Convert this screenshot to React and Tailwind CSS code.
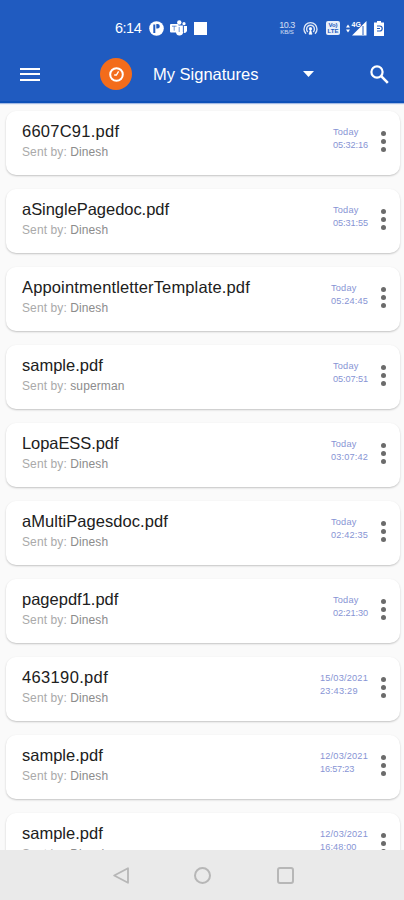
import React from 'react';

const documents = [
  { name: '6607C91.pdf', sender: 'Dinesh', date: 'Today', time: '05:32:16', fit: 'tracking-[0.25px]', timeWidth: 'w-[35px]', timeFit: 'tracking-[-0.1px]' },
  { name: 'aSinglePagedoc.pdf', sender: 'Dinesh', date: 'Today', time: '05:31:55', fit: 'tracking-[-0.04px]', timeWidth: 'w-[35px]', timeFit: 'tracking-[-0.1px]' },
  { name: 'AppointmentletterTemplate.pdf', sender: 'Dinesh', date: 'Today', time: '05:24:45', fit: 'tracking-[0.14px]', timeWidth: 'w-[37px]', timeFit: 'tracking-[0.15px]' },
  { name: 'sample.pdf', sender: 'superman', date: 'Today', time: '05:07:51', fit: 'tracking-normal', timeWidth: 'w-[35px]', timeFit: 'tracking-[-0.1px]' },
  { name: 'LopaESS.pdf', sender: 'Dinesh', date: 'Today', time: '03:07:42', fit: 'tracking-[-0.07px]', timeWidth: 'w-[37px]', timeFit: 'tracking-[0.15px]' },
  { name: 'aMultiPagesdoc.pdf', sender: 'Dinesh', date: 'Today', time: '02:42:35', fit: 'tracking-[0.05px]', timeWidth: 'w-[37px]', timeFit: 'tracking-[0.15px]' },
  { name: 'pagepdf1.pdf', sender: 'Dinesh', date: 'Today', time: '02:21:30', fit: 'tracking-normal', timeWidth: 'w-[35px]', timeFit: 'tracking-[-0.1px]' },
  { name: '463190.pdf', sender: 'Dinesh', date: '15/03/2021', time: '23:43:29', fit: 'tracking-[0.35px]', timeWidth: 'w-[48px]', timeFit: 'tracking-[0.25px]' },
  { name: 'sample.pdf', sender: 'Dinesh', date: '12/03/2021', time: '16:57:23', fit: 'tracking-normal', timeWidth: 'w-[48px]', timeFit: 'tracking-[-0.2px]' },
  { name: 'sample.pdf', sender: 'Dinesh', date: '12/03/2021', time: '16:48:00', fit: 'tracking-normal', timeWidth: 'w-[48px]', timeFit: 'tracking-[0.1px]' },
];

const StatusBar = () => (
  <div className="flex h-14 items-center pl-[115px] text-white">
    <span className="w-[34px] text-[14.5px] leading-none tracking-[-0.5px]">6:14</span>
    <svg className="size-[15px]" viewBox="0 0 15 15">
      <circle cx="7.5" cy="7.5" r="7.3" fill="#fff" />
      <path d="M5.3 12V3.5" stroke="#205bc0" strokeWidth="2" fill="none" />
      <path d="M7.3 3h1.2a2.3 2.3 0 0 1 0 4.6H7.3z" fill="#205bc0" />
    </svg>
    {/* Teams */}
    <svg className="ml-[6px] h-4 w-[17px]" viewBox="0 0 17 16" fill="#fff">
      <circle cx="9.3" cy="2.5" r="2.2" />
      <circle cx="14" cy="3.7" r="1.6" />
      <path d="M6 5.5h7v6a3.5 3.5 0 0 1-7 1z" />
      <path d="M13.7 6H17v4.5a2.5 2.5 0 0 1-3.3 2.3z" />
      <rect y="4" width="8.5" height="8.5" rx="1" />
      <path d="M2 6.2h4.5M4.2 6.2v4.5M9.2 7v5M13.3 6v6" stroke="#205bc0" strokeOpacity=".7" strokeWidth=".9" />
    </svg>
    <div className="ml-[7px] size-[13px] bg-white" />

    <div className="ml-[72px] flex w-4 flex-col items-center text-white/80">
      <span className="text-[9px] leading-[8px] tracking-[-0.5px]">10.3</span>
      <span className="text-[6px] leading-[6px] tracking-[-0.1px]">KB/S</span>
    </div>
    {/* hotspot */}
    <svg className="ml-2 h-[14px] w-[15px]" viewBox="0 0 15 14" fill="none" stroke="#fff" strokeOpacity=".85" strokeWidth="1.4">
      <path d="M3 12.8a6.5 6.5 0 1 1 9 0M4.8 10.9a3.9 3.9 0 1 1 5.4 0" />
      <path d="M7.5 8.5L6 13.2h3z" strokeWidth=".8" fill="#fff" />
      <circle cx="7.5" cy="7.7" r="1" fill="#fff" />
    </svg>
    <div className="ml-[8px] flex h-[14px] w-[14px] flex-col items-center justify-center rounded-[2px] bg-white/90 text-[6px] leading-[6px] font-bold text-[#205bc0]">
      <span>Vo)</span>
      <span>LTE</span>
    </div>
    {/* mobile data and signal */}
    <svg className="ml-[6px] h-[15px] w-[21px]" viewBox="0 0 21 15" fill="#fff">
      <path d="M0 6.5L2 3.5l2 3zM0 8.5h4l-2 3z" />
      <path d="M20.5 0v14.5H6z" />
      <path d="M17 5v9" stroke="#205bc0" strokeWidth="1" />
      <text x="5.5" y="6" fontSize="7" fontWeight="bold" fontFamily="Liberation Sans, sans-serif">4G</text>
    </svg>
    {/* battery */}
    <svg className="ml-[7px] h-[15px] w-[10px]" viewBox="0 0 10 15">
      <path d="M3 0h4v1.5h3V15H0V1.5h3z" fill="#fff" />
      <path d="M3 5h2.7a2.4 2.4 0 0 1 0 5H3M3 7.5h3" stroke="#205bc0" strokeWidth="1.2" fill="none" />
    </svg>
  </div>
);

const Toolbar = () => (
  <div className="flex h-9 items-center pl-5 text-white">
    <div className="flex w-5 flex-col gap-[3.5px]">
      <div className="h-[2px] bg-white" />
      <div className="h-[2px] bg-white" />
      <div className="h-[2px] bg-white" />
    </div>
    <div className="ml-[60px] flex size-8 items-center justify-center rounded-full bg-[#f36c1b]">
      <svg className="size-[15px]" viewBox="0 0 15 15" fill="none" stroke="#fff">
        <circle cx="7.5" cy="7.5" r="6.3" strokeWidth="2" />
        <path d="M9.6 4.4L7.4 8H5.2" strokeWidth="1.3" />
      </svg>
    </div>
    <span className="ml-[21px] w-[150px] text-[16.5px] leading-none">My Signatures</span>
    <svg className="h-[6px] w-[11px]" viewBox="0 0 11 6" fill="#fff">
      <path d="M0 0h11L5.5 6z" />
    </svg>
    <svg className="ml-[56px] size-[19px]" viewBox="0 0 19 19" fill="none" stroke="#fff">
      <circle cx="7" cy="7" r="5.6" strokeWidth="2.2" />
      <path d="M11.2 11.2l6.6 6.6" strokeWidth="2.6" />
    </svg>
  </div>
);

const DocumentCard = ({ doc }) => (
  <div className="flex h-16 shrink-0 rounded-[10px] bg-white pl-4 shadow-[0_1px_2px_rgba(0,0,0,0.22)]">
    <div className="flex-1 pt-[10px] whitespace-nowrap">
      <div className={`text-[16.5px] leading-5 text-[#202020] ${doc.fit}`}>{doc.name}</div>
      <div className="mt-[2px] text-[12px] leading-[18px] tracking-[0.1px] text-[#aaa]">
        Sent by: <span className="text-[#8c8c8c]">{doc.sender}</span>
      </div>
    </div>
    <div className={`pt-[15px] text-[9.2px] leading-[12.5px] whitespace-nowrap text-[#8794d4] ${doc.timeWidth}`}>
      <div className="tracking-[0.2px]">{doc.date}</div>
      <div className={doc.timeFit}>{doc.time}</div>
    </div>
    <div className="mr-[14px] ml-[13px] flex flex-col gap-[3px] pt-[20px]">
      <div className="size-[5px] rounded-full bg-[#6b6b6b]" />
      <div className="size-[5px] rounded-full bg-[#6b6b6b]" />
      <div className="size-[5px] rounded-full bg-[#6b6b6b]" />
    </div>
  </div>
);

const NavigationBar = () => (
  <div className="flex h-[50px] shrink-0 items-center bg-[#eaeaea] pl-[113px]">
    <svg className="h-[17px] w-4" viewBox="0 0 16 17" fill="none" stroke="#b7b7b7" strokeWidth="1.8" strokeLinejoin="round">
      <path d="M15 1.2v14.6L1.2 8.5z" />
    </svg>
    <div className="ml-[65px] size-[17px] rounded-full border-2 border-[#b7b7b7]" />
    <div className="ml-[66px] size-[17px] rounded-[3px] border-2 border-[#b7b7b7]" />
  </div>
);

const App = () => {
  return (
    <div className="flex h-[900px] w-[404px] flex-col overflow-hidden bg-[#fafafa] font-['Liberation_Sans',Arial,sans-serif]">
      <header className="h-[103px] shrink-0 border-b-2 border-[#0d50b8] bg-[#205bc0] shadow-[0_1px_1px_rgba(32,91,192,0.4)]">
        <StatusBar />
        <Toolbar />
      </header>
      <main className="flex min-h-0 flex-1 flex-col gap-[14px] overflow-hidden pt-2 pr-1 pl-[6px]">
        {documents.map((doc) => (
          <DocumentCard key={doc.time} doc={doc} />
        ))}
      </main>
      <NavigationBar />
    </div>
  );
};

export default App;
